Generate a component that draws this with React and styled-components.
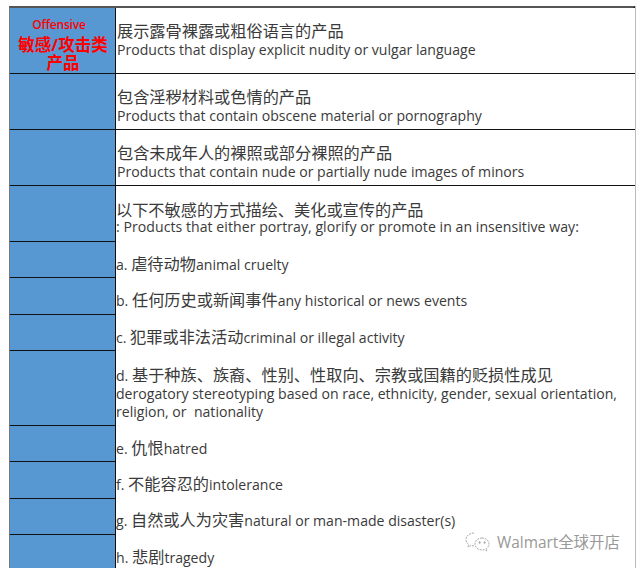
import React from 'react';
import styled, { createGlobalStyle } from 'styled-components';

const GlobalStyle = createGlobalStyle`
  html, body {
    margin: 0;
    padding: 0;
    width: 640px;
    height: 568px;
    overflow: hidden;
    background: #fff;
  }
`;

const Page = styled.div`
  position: relative;
  width: 640px;
  height: 568px;
  padding: 6px 0 0 9px;
  box-sizing: border-box;
  overflow: hidden;
  background: #fefefe;
  font-family: "Open Sans", "Noto Sans CJK SC", sans-serif;
  color: #3a3a3a;
`;

const Table = styled.div`
  display: grid;
  grid-template-columns: 106px 519px;
  width: 626px;
  box-sizing: border-box;
  border-top: 2px solid #555;
  border-left: 1px solid #777;
  border-right: 2px solid #222;
  box-shadow: 1px 0 0 #bbb;
`;

const Side = styled.div`
  grid-column: 1;
  height: ${({ h }) => h}px;
  box-sizing: border-box;
  background: #5898d2;
  border-right: 1px solid #111;
  border-bottom: 1px solid #111;
  text-align: center;
  color: #ff0000;
`;

const SideSmall = styled.div`
  padding: 9px 7px 4px 0;
  font-size: 12px;
  font-weight: 600;
  letter-spacing: -0.2px;
  line-height: 15px;
`;

const SideBig = styled.div`
  font-size: 16.5px;
  font-weight: 700;
  line-height: 18px;
  margin-right: -1px;
`;

const Cell = styled.div`
  box-sizing: border-box;
  height: ${({ h }) => h}px;
  border-bottom: 1px solid #111;
  display: flex;
  flex-direction: column;
  justify-content: flex-end;
  padding: 0 0 ${({ pb }) => pb}px 1px;
  background: #fff;
`;

const Merged = styled.div`
  grid-column: 2;
  grid-row: 4 / span 9;
  background: #fff;
`;

const Item = styled.div`
  height: ${({ h }) => h}px;
  box-sizing: border-box;
  display: flex;
  flex-direction: column;
  justify-content: flex-end;
  padding-bottom: ${({ pb }) => pb ?? 3}px;
`;

const Zh = styled.div`
  font-size: 16.2px;
  line-height: 18px;
  margin-bottom: ${({ gap }) => gap ?? 0}px;
`;

const En = styled.div`
  font-size: 14.08px;
  line-height: 18px;
  letter-spacing: ${({ track }) => track ?? 0}px;
  white-space: pre-wrap;
`;

const Mixed = styled.div`
  font-size: 14.08px;
  line-height: 20px;
  white-space: nowrap;
  margin-bottom: ${({ gap }) => gap ?? 0}px;
  span { font-size: 16.2px; }
`;

const Mark = styled.div`
  position: absolute;
  left: 465px;
  top: 530px;
  display: flex;
  align-items: center;
  gap: 6px;
  font-size: 15.4px;
  color: #999;
  text-shadow: 0 0 2px #fff, 0 0 2px #fff;
`;

const leftRows = [56, 36, 37, 36, 75, 36, 37, 36, 60];

const WeChat = () => (
  <svg width="26" height="20" viewBox="0 0 26 20" fill="none" stroke="#aaa" strokeWidth="1" strokeDasharray="2 1">
    <path d="M9 1C4.500 1 1 4 1 7.500c0 2 1 3.500 2.500 4.700L3 15l3-1.500c1 .3 2 .4 3 .4" />
    <path d="M17 6c-4 0-7 2.700-7 6s3 6 7 6c1 0 1.800-.1 2.600-.4L22 19l-.5-2.500C23.200 15.300 24 13.700 24 12c0-3.300-3-6-7-6z" />
    <circle cx="14.500" cy="10.500" r=".8" fill="#aaa" />
    <circle cx="19.500" cy="10.500" r=".8" fill="#aaa" />
  </svg>
);

const App = () => (
  <Page>
    <GlobalStyle />
    <Table>
      <Side h={66}>
        <SideSmall>Offensive</SideSmall>
        <SideBig>敏感/攻击类</SideBig>
        <SideBig>产品</SideBig>
      </Side>
      <Cell h={66} pb={14}>
        <Zh gap={1}>展示露骨裸露或粗俗语言的产品</Zh>
        <En>Products that display explicit nudity or vulgar language</En>
      </Cell>
      <Side h={56} />
      <Cell h={56} pb={4}>
        <Zh gap={1}>包含淫秽材料或色情的产品</Zh>
        <En>Products that contain obscene material or pornography</En>
      </Cell>
      <Side h={56} />
      <Cell h={56} pb={4}>
        <Zh gap={1}>包含未成年人的裸照或部分裸照的产品</Zh>
        <En>Products that contain nude or partially nude images of minors</En>
      </Cell>
      {leftRows.map((h, i) => (
        <Side key={i} h={h} />
      ))}
      <Merged>
        <Item h={56} pb={6}>
          <Zh gap={-1}>以下不敏感的方式描绘、美化或宣传的产品</Zh>
          <En track={0.05}>: Products that either portray, glorify or promote in an insensitive way:</En>
        </Item>
        <Item h={36}><Mixed>a. <span>虐待动物</span>animal cruelty</Mixed></Item>
        <Item h={37} pb={4}><Mixed>b. <span>任何历史或新闻事件</span>any historical or news events</Mixed></Item>
        <Item h={36}><Mixed>c. <span>犯罪或非法活动</span>criminal or illegal activity</Mixed></Item>
        <Item h={75} pb={5}>
          <Mixed gap={-1}>d. <span>基于种族、族裔、性别、性取向、宗教或国籍的贬损性成见</span></Mixed>
          <En>derogatory stereotyping based on race, ethnicity, gender, sexual orientation,{'\n'}religion, or  nationality</En>
        </Item>
        <Item h={36}><Mixed>e. <span>仇恨</span>hatred</Mixed></Item>
        <Item h={37} pb={4}><Mixed>f. <span>不能容忍的</span>intolerance</Mixed></Item>
        <Item h={36} pb={4}><Mixed>g. <span>自然或人为灾害</span>natural or man-made disaster(s)</Mixed></Item>
        <Item h={36}><Mixed>h. <span>悲剧</span>tragedy</Mixed></Item>
      </Merged>
    </Table>
    <Mark><WeChat />Walmart全球开店</Mark>
  </Page>
);

export default App;
